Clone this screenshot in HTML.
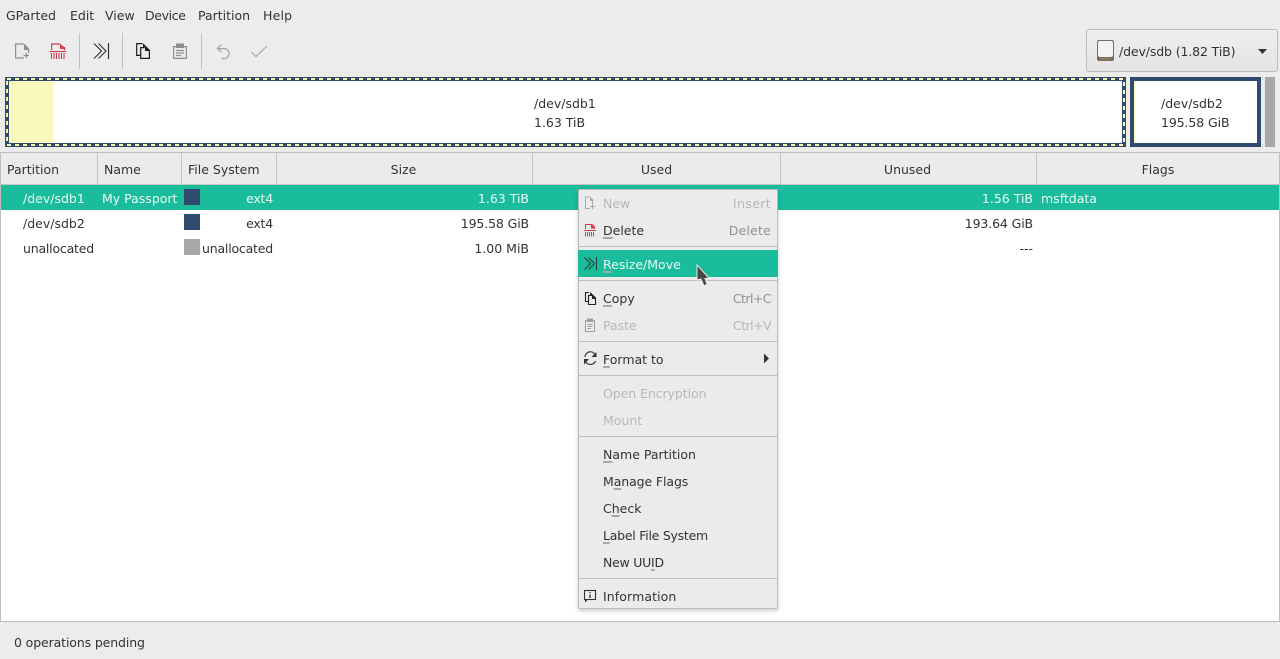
<!DOCTYPE html>
<html><head><meta charset="utf-8"><title>GParted</title>
<style>
html,body{margin:0;padding:0}
body{width:1280px;height:659px;overflow:hidden;background:#ececec;position:relative;font-family:"DejaVu Sans","Liberation Sans",sans-serif;font-size:12.5px;color:#2e3436}
.t,.r,.c{position:absolute;height:20px;line-height:20px;white-space:nowrap;margin-top:1px}
.r{text-align:right}
.c{text-align:center}
.b{position:absolute}
.w{color:#e8fbf5}
.d{color:#b6b8b8}
.s{color:#8f9292}
.n{letter-spacing:-.12px}
.u{letter-spacing:-.2px}
u{text-decoration-color:#a8a8a8;text-decoration-thickness:2px;text-underline-offset:2px}
svg{position:absolute;left:0;top:0}
</style></head><body>
<div class="t" style="left:6px;top:5px">GParted</div>
<div class="t" style="left:70px;top:5px">Edit</div>
<div class="t" style="left:105px;top:5px">View</div>
<div class="t" style="left:145px;top:5px;letter-spacing:-.35px">Device</div>
<div class="t" style="left:198px;top:5px">Partition</div>
<div class="t" style="left:263px;top:5px;letter-spacing:.2px">Help</div>

<div class="b" style="left:1086px;top:29px;width:190px;height:41px;border:1px solid #bcbcbc;border-radius:3px;background:linear-gradient(#efefef,#e4e4e4)"></div>
<div class="t n" style="left:1119px;top:41px">/dev/sdb (1.82 TiB)</div>

<div class="b" style="left:0;top:152px;width:1278px;height:468px;border:1px solid #bdbdbd;background:#fff"></div>
<div class="b" style="left:1px;top:153px;width:1278px;height:31px;background:#ebebeb;border-bottom:1px solid #c4c4c4"></div>
<div class="b" style="left:97px;top:153px;width:1px;height:31px;background:#c4c4c4"></div>
<div class="b" style="left:181px;top:153px;width:1px;height:31px;background:#c4c4c4"></div>
<div class="b" style="left:276px;top:153px;width:1px;height:31px;background:#c4c4c4"></div>
<div class="b" style="left:532px;top:153px;width:1px;height:31px;background:#c4c4c4"></div>
<div class="b" style="left:780px;top:153px;width:1px;height:31px;background:#c4c4c4"></div>
<div class="b" style="left:1036px;top:153px;width:1px;height:31px;background:#c4c4c4"></div>
<div class="t" style="left:7px;top:159px">Partition</div>
<div class="t" style="left:104px;top:159px">Name</div>
<div class="t" style="left:188px;top:159px">File System</div>
<div class="c" style="left:276px;width:255px;top:159px">Size</div>
<div class="c" style="left:533px;width:247px;top:159px">Used</div>
<div class="c" style="left:780px;width:255px;top:159px">Unused</div>
<div class="c" style="left:1037px;width:242px;top:159px">Flags</div>

<div class="b" style="left:1px;top:185px;width:1278px;height:25px;background:#1abc9c"></div>
<div class="t w" style="left:23px;top:188px">/dev/sdb1</div>
<div class="t w" style="left:102px;top:188px">My Passport</div>
<div class="b" style="left:184px;top:189px;width:16px;height:16px;background:#2f4b6e"></div>
<div class="r w" style="left:200px;width:73px;top:188px;letter-spacing:-.2px">ext4</div>
<div class="r w" style="left:400px;width:129px;top:188px">1.63 TiB</div>
<div class="r w" style="left:900px;width:133px;top:188px">1.56 TiB</div>
<div class="t w" style="left:1041px;top:188px">msftdata</div>

<div class="t" style="left:23px;top:213px">/dev/sdb2</div>
<div class="b" style="left:184px;top:214px;width:16px;height:16px;background:#2f4b6e"></div>
<div class="r" style="left:200px;width:73px;top:213px;letter-spacing:-.2px">ext4</div>
<div class="r n" style="left:400px;width:129px;top:213px">195.58 GiB</div>
<div class="r n" style="left:900px;width:133px;top:213px">193.64 GiB</div>

<div class="t u" style="left:23px;top:238px">unallocated</div>
<div class="b" style="left:184px;top:239px;width:16px;height:16px;background:#a8a8a8"></div>
<div class="r u" style="left:200px;width:73px;top:238px">unallocated</div>
<div class="r" style="left:400px;width:129px;top:238px">1.00 MiB</div>
<div class="r" style="left:900px;width:133px;top:238px">---</div>

<div class="t n" style="left:14px;top:632px">0 operations pending</div>

<svg width="1280" height="659" viewBox="0 0 1280 659" style="z-index:1">
<!-- partition map -->
<rect x="5" y="77" width="1121" height="70" fill="#2f4b6e"/>
<rect x="7" y="79" width="1117" height="66" fill="none" stroke="#f8f8b0" stroke-width="2" stroke-dasharray="4 4" shape-rendering="crispEdges"/>
<rect x="9" y="81" width="1113" height="62" fill="#fff"/>
<rect x="9" y="81" width="44" height="62" fill="#f8f8ba"/>
<rect x="1130" y="77" width="131" height="70" fill="#2f4b6e"/>
<rect x="1134" y="81" width="123" height="62" fill="#fff"/>
<rect x="1134" y="81" width="1" height="62" fill="#f8f8ba"/>
<rect x="1265" y="77" width="10" height="70" fill="#a8a8a8"/>
<!-- toolbar separators -->
<path d="M79.5 33V69M122.5 33V69M201.5 33V69" stroke="#c0c0c0" fill="none"/>
<!-- new -->
<g fill="none" stroke="#8e8e8e" stroke-width="1.2">
<path d="M24 44H15.6V58H24M28.6 49V53"/><path d="M23.5 55.5H29M26.3 52.8V58.3"/>
</g>
<path d="M24 43.5L29 48.5V50H24Z" fill="#8e8e8e"/>
<!-- delete -->
<g fill="none" stroke="#d13f52" stroke-width="1.2">
<path d="M51.6 50V44H60M64.6 47V50"/><path d="M50 51.5H66"/>
<path d="M51.5 53V59M54 53V59M56.5 53V59M59 53V59M61.5 53V59M64 53V59" stroke-width="1.1"/>
</g>
<path d="M60 43.5L65 48V49H60Z" fill="#d13f52"/>
<!-- resize -->
<g fill="none" stroke="#2e3436" stroke-width="1.1">
<path d="M94 43.5L101.5 51L94 58.5M98.5 43.5L106 51L98.5 58.5"/>
<path d="M108.5 43V59" stroke-width="1.2"/>
</g>
<!-- copy -->
<g fill="none" stroke="#1c1c1c" stroke-width="1.2">
<path d="M142.5 43.6H136.7V55.4H140.5"/><path d="M144.5 47.6H140.7V58.4H149.4V50"/>
</g>
<path d="M143 43.2L150 50V51H145V47.2H143Z" fill="#1c1c1c"/>
<!-- paste -->
<g fill="none" stroke="#8e8e8e" stroke-width="1.2">
<path d="M176 46.6H173.6V58.4H186.4V46.6H184"/><path d="M176 50.5H184M176 53H184M176 55.5H181"/>
</g>
<rect x="176" y="43.5" width="8" height="4.5" fill="#8e8e8e"/>
<!-- undo -->
<path d="M221.5 44.5L217.3 48.5L221.5 52M217.5 48.6H223.5C231 48.6 231 58.6 223.5 58.6H221.5" fill="none" stroke="#a2a2a2" stroke-width="1.2"/>
<!-- check -->
<path d="M251.5 52L256 56.5L267 46" fill="none" stroke="#a8a8a8" stroke-width="1.2"/>
<!-- combo icon -->
<rect x="1097" y="40" width="17" height="21" rx="2" fill="#6f6f6f"/>
<rect x="1098" y="41" width="15" height="16" rx="2" fill="#f3f3f3"/>
<rect x="1100" y="58" width="10" height="1.5" fill="#a87a3a"/>
<path d="M1258 49H1267L1262.5 54Z" fill="#2e3436"/>
</svg>

<div class="b" style="z-index:2;left:578px;top:189px;width:198px;height:418px;background:#ebebeb;border:1px solid #bdbdbd;border-radius:2px;box-shadow:0 2px 4px rgba(0,0,0,.2)"></div>
<div class="b" style="z-index:3;left:578px;top:250px;width:200px;height:27px;background:#1abc9c"></div>
<div class="b" style="z-index:3;left:579px;top:246px;width:198px;height:1px;background:#bdbdbd"></div>
<div class="b" style="z-index:3;left:579px;top:280px;width:198px;height:1px;background:#bdbdbd"></div>
<div class="b" style="z-index:3;left:579px;top:341px;width:198px;height:1px;background:#bdbdbd"></div>
<div class="b" style="z-index:3;left:579px;top:375px;width:198px;height:1px;background:#bdbdbd"></div>
<div class="b" style="z-index:3;left:579px;top:436px;width:198px;height:1px;background:#bdbdbd"></div>
<div class="b" style="z-index:3;left:579px;top:578px;width:198px;height:1px;background:#bdbdbd"></div>
<div style="position:absolute;left:0;top:0;z-index:4">
<div class="t d" style="left:603px;top:193px">New</div><div class="r d" style="left:700px;width:71px;top:193px;letter-spacing:.35px">Insert</div>
<div class="t" style="left:603px;top:220px"><u>D</u>elete</div><div class="r s" style="left:700px;width:71px;top:220px;letter-spacing:.2px">Delete</div>
<div class="t w" style="left:603px;top:254px"><u>R</u>esize/Move</div>
<div class="t" style="left:603px;top:288px"><u>C</u>opy</div><div class="r s" style="left:700px;width:71px;top:288px;letter-spacing:-.55px">Ctrl+C</div>
<div class="t d" style="left:603px;top:315px">Paste</div><div class="r d" style="left:700px;width:71px;top:315px;letter-spacing:-.55px">Ctrl+V</div>
<div class="t" style="left:603px;top:349px"><u>F</u>ormat to</div>
<div class="t d" style="left:603px;top:383px;letter-spacing:-.07px">Open Encryption</div>
<div class="t d" style="left:603px;top:410px">Mount</div>
<div class="t" style="left:603px;top:444px"><u>N</u>ame Partition</div>
<div class="t" style="left:603px;top:471px;letter-spacing:-.1px">M<u>a</u>nage Flags</div>
<div class="t" style="left:603px;top:498px">C<u>h</u>eck</div>
<div class="t" style="left:603px;top:525px;letter-spacing:-.25px"><u>L</u>abel File System</div>
<div class="t" style="left:603px;top:552px;letter-spacing:-.25px">New UU<u>I</u>D</div>
<div class="t" style="left:603px;top:586px;letter-spacing:.1px">Information</div>
<div class="t" style="left:534px;top:93px">/dev/sdb1</div>
<div class="t" style="left:534px;top:112px">1.63 TiB</div>
<div class="t" style="left:1161px;top:93px">/dev/sdb2</div>
<div class="t" style="left:1161px;top:112px;letter-spacing:-.1px">195.58 GiB</div>
</div>

<svg width="1280" height="659" viewBox="0 0 1280 659" style="z-index:5">
<!-- menu new -->
<g fill="none" stroke="#a8a8a8" stroke-width="1">
<path d="M590 197H585.5V208.5H590M592.5 201V204.5M590 206.5H595M592.5 204V209"/>
</g>
<path d="M590 196.5L593.5 200V201H590Z" fill="#a8a8a8"/>
<!-- menu delete -->
<g fill="none" stroke="#d13f52" stroke-width="1">
<path d="M585.5 229V224.5H592L594.5 227V229M584 230.5H596M585.5 232V236.5M587.5 232V236.5M589.5 232V236.5M591.5 232V236.5M593.5 232V236.5"/>
</g>
<path d="M591 224.5L595 227.5V228.5H591Z" fill="#d13f52"/>
<!-- menu resize -->
<path d="M584.5 257.5L590.5 263.5L584.5 269.5M588.5 257.5L594.5 263.5L588.5 269.5M596.5 257V270" fill="none" stroke="#1f3f3c" stroke-width="1"/>
<!-- menu copy -->
<g fill="none" stroke="#222" stroke-width="1.1">
<path d="M589 292.5H585.5V301.5H588M592 295.5H588.5V304.5H595.5V299"/>
</g>
<path d="M590 292L596 297.5V299H592V295.5H590Z" fill="#222"/>
<!-- menu paste -->
<g fill="none" stroke="#a0a0a0" stroke-width="1.1">
<path d="M587 320.5H585.5V331.5H594.5V320.5H593M587.5 324.5H592.5M587.5 326.5H592.5M587.5 328.5H591"/>
</g>
<rect x="587" y="318.5" width="6" height="3.5" fill="#a0a0a0"/>
<!-- menu refresh -->
<g fill="none" stroke="#2e3436" stroke-width="1.2">
<path d="M585 357C585.5 351 593 350 595.5 355M585 360C586.5 366 594 365.5 595.5 361"/>
</g>
<path d="M596.5 352V357H591.5ZM584 364.5V359H589Z" fill="#2e3436"/>
<!-- submenu arrow -->
<path d="M764 353.5L769 358.5L764 363.5Z" fill="#2e3436"/>
<!-- menu info -->
<rect x="584.5" y="590.5" width="11" height="9" fill="none" stroke="#2e3436" stroke-width="1.1"/>
<path d="M585 600V602.5L587.5 600Z" fill="#2e3436"/>
<path d="M590 592V593.3M590 594.5V598" stroke="#2e3436" stroke-width="1.3" fill="none"/>
<!-- cursor -->
<path d="M697 265V280L701 279L704 286L707 284L705 278.5L709 278Z" fill="#454545" stroke="#e8e8e8" stroke-width="1"/>
</svg>
</body></html>
